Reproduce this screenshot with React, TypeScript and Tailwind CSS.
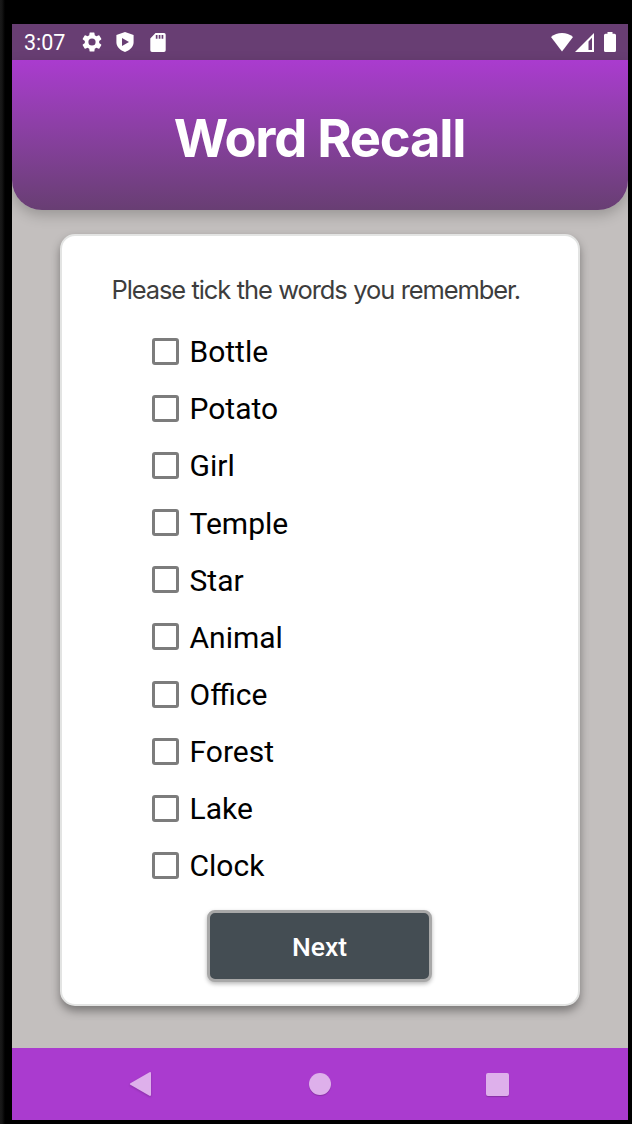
const words = ['Bottle', 'Potato', 'Girl', 'Temple', 'Star', 'Animal', 'Office', 'Forest', 'Lake', 'Clock'];

function StatusBar() {
  return (
    <div className="flex h-9 items-center bg-[#683e73] pr-3 pl-3 text-white">
      <span className="w-[57px] pt-0.5 font-['Roboto',sans-serif] text-[21.5px] leading-none">3:07</span>
      <svg className="size-[22px]" viewBox="1 1 22 22" fill="currentColor">
        <path d="M19.14 12.94c.04-.3.06-.61.06-.94 0-.32-.02-.64-.07-.94l2.03-1.58a.49.49 0 0 0 .12-.61l-1.92-3.32a.49.49 0 0 0-.59-.22l-2.39.96a7.03 7.03 0 0 0-1.62-.94l-.36-2.54a.48.48 0 0 0-.48-.41h-3.84a.48.48 0 0 0-.47.41l-.36 2.54c-.59.24-1.13.57-1.62.94l-2.39-.96a.48.48 0 0 0-.59.22L2.74 8.87a.48.48 0 0 0 .12.61l2.03 1.58c-.05.3-.09.63-.09.94s.02.64.07.94l-2.03 1.58a.49.49 0 0 0-.12.61l1.92 3.32c.12.22.37.29.59.22l2.39-.96c.5.38 1.03.7 1.62.94l.36 2.54c.05.24.24.41.48.41h3.84c.24 0 .44-.17.47-.41l.36-2.54a7 7 0 0 0 1.62-.94l2.39.96c.22.08.47 0 .59-.22l1.92-3.32a.48.48 0 0 0-.12-.61zM12 15.6A3.6 3.6 0 1 1 12 8.4a3.6 3.6 0 0 1 0 7.2" />
      </svg>
      <svg className="ml-[13px] h-5 w-[18px]" viewBox="0 0 18 20" fill="currentColor" fillRule="evenodd">
        <path d="M9 0 17.6 3v7.5c0 4.3-4 8-8.6 9.5C4.400 18.500.4 14.800.4 10.500V3zM6 6v8l7-4z" />
      </svg>
      <svg className="ml-[15.5px] h-[19px] w-4" viewBox="0 0 16 19" fill="currentColor" fillRule="evenodd">
        <path d="M5.500 0H14a1.700 1.700 0 0 1 1.700 1.700v15.600A1.700 1.700 0 0 1 14 19H2A1.700 1.700 0 0 1 .3 17.300V5.500zM5.800 2v3.800h1.700V2zm2.900 0v3.800h1.700V2zm2.900 0v3.800h1.700V2z" />
      </svg>
      <svg className="ml-auto h-[19px] w-[22px]" viewBox="0 0 22 19" fill="currentColor">
        <path d="M0 4C6-1.300 16-1.300 22 4L11 18.500z" />
      </svg>
      <svg className="ml-0.5 h-[19px] w-[19px]" viewBox="0 0 19 19" fill="currentColor" fillRule="evenodd">
        <path d="M19 0v19H0zM17 4.800 13.500 8.500V17H17z" />
      </svg>
      <svg className="ml-2.5 h-5 w-3" viewBox="0 0 12 20" fill="currentColor">
        <path d="M3.500 0h5v1.700h2A1.500 1.500 0 0 1 12 3.200v15.300a1.500 1.500 0 0 1-1.500 1.500h-9A1.500 1.500 0 0 1 0 18.500V3.200a1.500 1.500 0 0 1 1.500-1.500h2z" />
      </svg>
    </div>
  );
}

function NavigationBar() {
  return (
    <nav className="flex h-[72px] items-center bg-[#aa3bcf] pl-[117px] text-[#deb0eb]">
      <svg className="h-[26px] w-[23px] drop-shadow-[0_1px_1px_rgba(0,0,0,0.2)]" viewBox="0 0 23 26" fill="currentColor">
        <path d="M1.400 12.200 20.500 1.200q1.500-.5 1.500 1v21.600q0 1.500-1.500 1L1.400 13.800q-1-.8 0-1.600" />
      </svg>
      <div className="ml-[157px] size-[22px] rounded-full bg-[#deb0eb] shadow-[0_1px_1px_rgba(0,0,0,0.2)]" />
      <div className="ml-[155px] size-[23px] rounded-[2px] bg-[#deb0eb] shadow-[0_1px_1px_rgba(0,0,0,0.2)]" />
    </nav>
  );
}

export default function App() {
  return (
    <div className="h-[1124px] w-[632px] bg-[linear-gradient(90deg,#1a1a1a_0px,#151515_2px,#000_5px)] pt-6 pr-1 pl-3">
      <div className="flex h-[1096px] flex-col overflow-hidden bg-[#c3bfbe]">
        <StatusBar />
        <header className="flex h-[150px] shrink-0 items-center justify-center rounded-b-[30px] bg-linear-to-b from-[#aa3bcf] to-[#683e73] shadow-[0_5px_14px_rgba(0,0,0,0.22)]">
          <h1 className="pt-[7px] pr-[1px] font-['Inter',sans-serif] text-[52.5px] leading-none font-bold tracking-[-1.25px] text-white">Word Recall</h1>
        </header>
        <main className="flex flex-1 flex-col pt-6">
          <section className="relative mx-12 flex h-[772px] flex-col rounded-[15px] border-2 border-[#e3e4e3] bg-white shadow-[0_5px_10px_rgba(0,0,0,0.38)]">
            <p className="mt-[38px] pl-[49.5px] font-['Inter',sans-serif] text-[25.5px] leading-8 tracking-[-1.13px] [word-spacing:0.6px] whitespace-nowrap text-[#3d3d3d]">Please tick the words you remember.</p>
            <div className="mt-[17px] flex flex-col pl-[90px]">
              {words.map((word) => (
                <label key={word} className="flex h-[57.08px] items-center font-['Roboto',sans-serif] text-[30px] leading-none text-black">
                  <input type="checkbox" className="mr-[10.5px] size-[27px] appearance-none rounded-[3px] border-[3px] border-[#7c7c7c] bg-white" />
                  <span className="pt-[1.6px]">{word}</span>
                </label>
              ))}
            </div>
            <button className="mt-[16.2px] ml-[145px] h-[72px] w-[225px] rounded-[8px] border-[3px] border-[#a8a8a8] bg-[#444d53] pt-px font-['Roboto',sans-serif] text-[26.5px] font-medium text-white shadow-[0_2px_4px_rgba(0,0,0,0.28)]">Next</button>
          </section>
        </main>
        <NavigationBar />
      </div>
    </div>
  );
}
